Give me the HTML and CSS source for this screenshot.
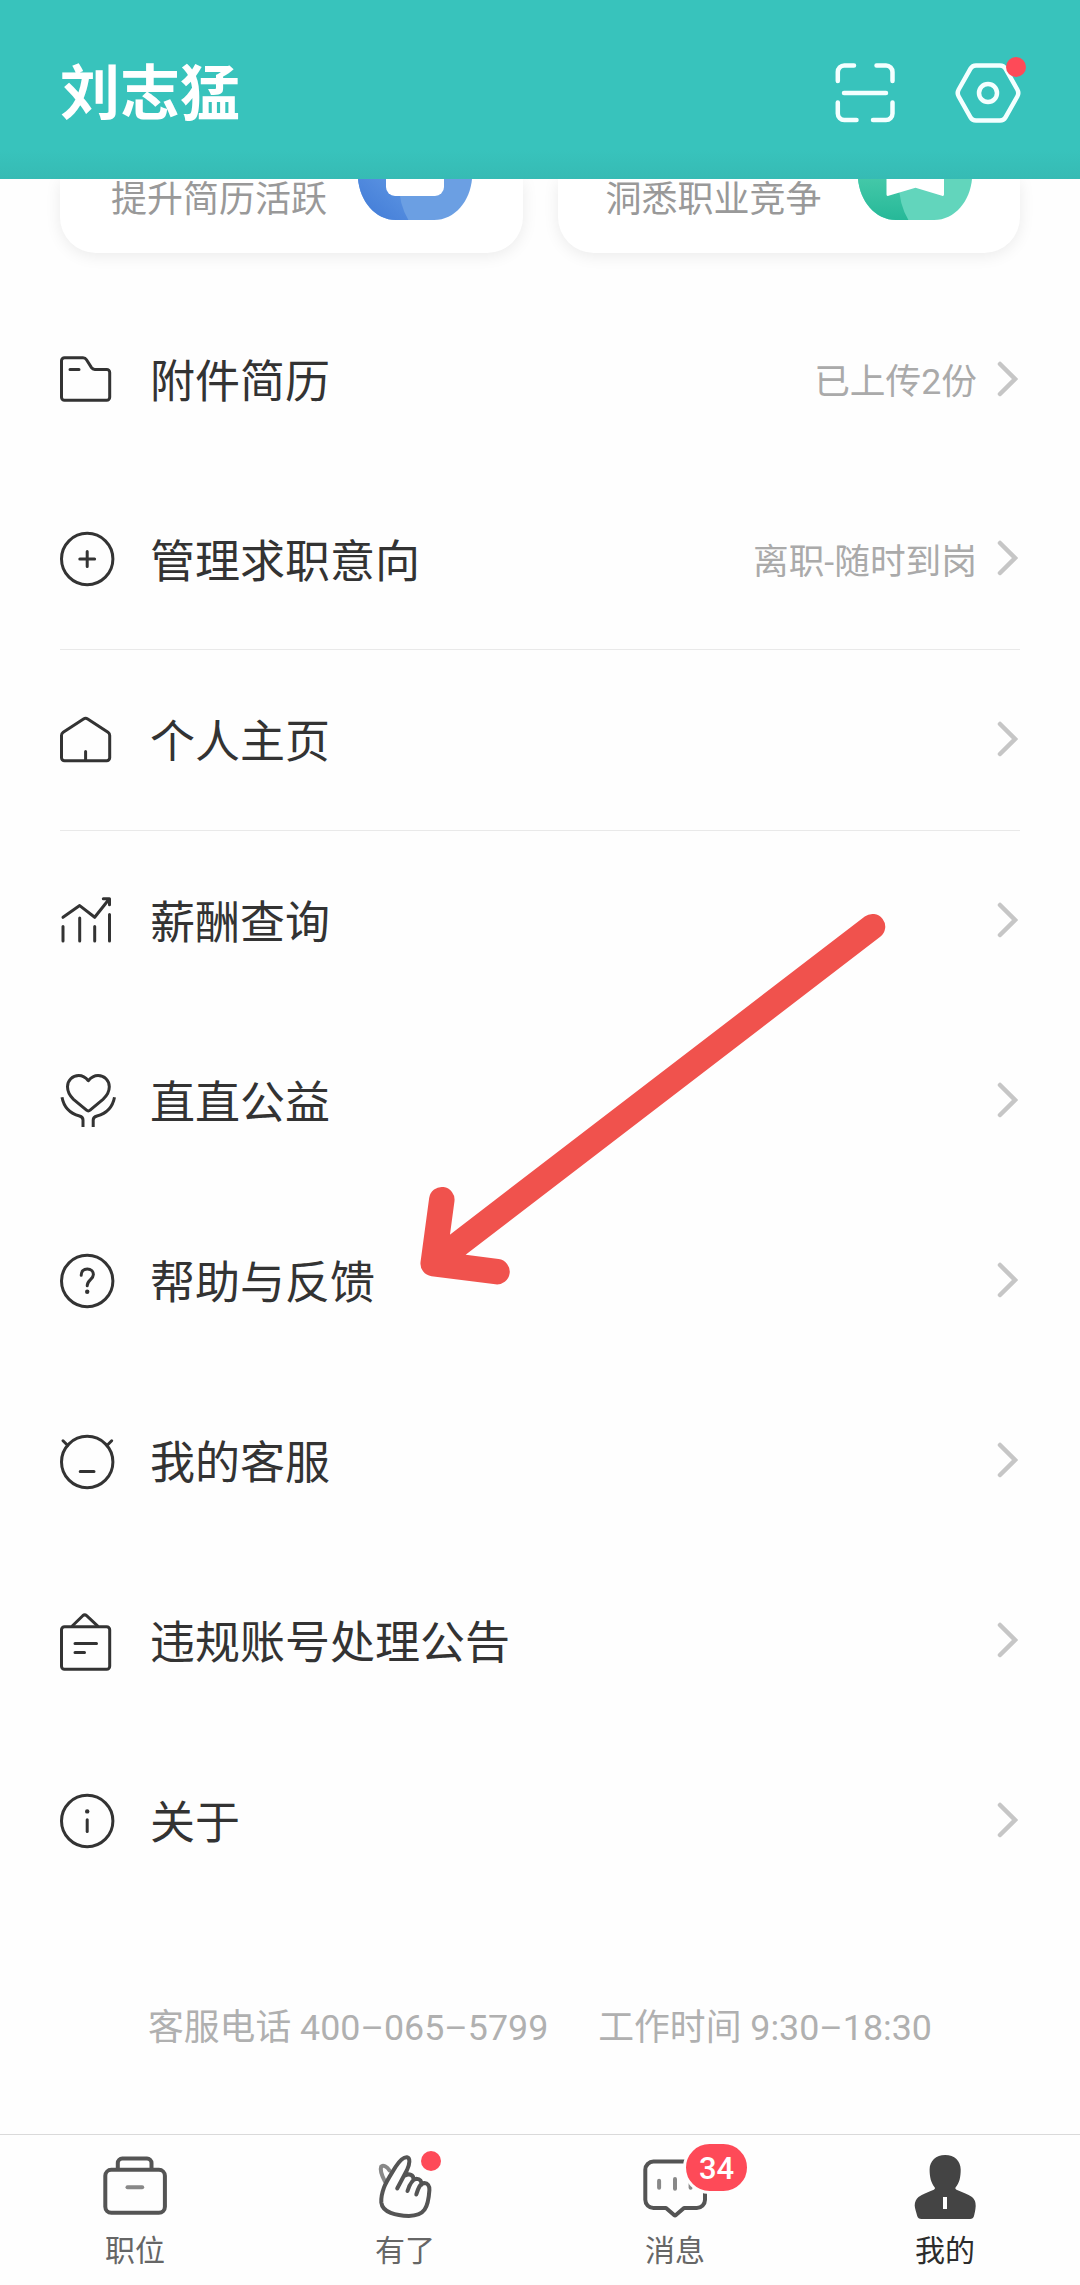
FILE: index.html
```html
<!DOCTYPE html>
<html lang="zh-CN">
<head>
<meta charset="utf-8">
<title>我的</title>
<link rel="stylesheet" href="styles.css">
</head>
<body>
<div class="app">
  <header class="header">
    <h1 class="name">刘志猛</h1>
    <div class="actions">
      <svg class="action" width="60" height="60" viewBox="0 0 60 60"><path d="M2.8 18V9a6.5 6.5 0 0 1 6.5-6.500H19M41.500 2.500H51a6.500 6.500 0 0 1 6.500 6.500V18M57.500 39.500V50.500a6.500 6.500 0 0 1-6.500 6.500H38M21.500 57H9.300a6.500 6.500 0 0 1-6.500-6.500V39.500M9 30H51"/></svg>
      <span class="with-dot">
        <svg class="action" width="66" height="60" viewBox="0 0 66 60"><path d="M21 2.500H45Q48.600 2.500 50.500 5.700L62.300 26.500Q64.300 30 62.300 33.500L50.500 54.300Q48.600 57.500 45 57.500H21Q17.400 57.500 15.500 54.300L3.700 33.500Q1.700 30 3.700 26.500L15.500 5.700Q17.400 2.500 21 2.500Z"/><circle cx="33" cy="30" r="9"/></svg>
        <i class="dot dot-settings"></i>
      </span>
    </div>
  </header>

  <section class="cards">
    <div class="card card-refresh">
      <span>提升简历活跃</span>
      <svg width="114" height="42" viewBox="0 0 114 42">
        <defs>
          <clipPath id="c1"><path d="M0 0C2 22 17 41 38 41H76C97 41 112 22 114 0Z"/></clipPath>
          <linearGradient id="g1" x1="0" y1="1" x2="1" y2="0"><stop offset="0" stop-color="#3f79d6"/><stop offset="1" stop-color="#5f97e3"/></linearGradient>
        </defs>
        <g clip-path="url(#c1)"><path fill="#6b9fe3" d="M0 0H114V42H0Z"/><path fill="url(#g1)" d="M0 0H41Q40 24 51 42H0Z"/></g>
        <path fill="#fff" d="M28 0H86V8a9 9 0 0 1-9 9H37a9 9 0 0 1-9-9Z"/>
      </svg>
    </div>
    <div class="card card-insight">
      <span>洞悉职业竞争</span>
      <svg width="114" height="42" viewBox="0 0 114 42">
        <defs>
          <clipPath id="c2"><path d="M0 0C2 22 17 41 38 41H76C97 41 112 22 114 0Z"/></clipPath>
          <linearGradient id="g2" x1="0" y1="1" x2="0" y2="0"><stop offset="0" stop-color="#26b898"/><stop offset="1" stop-color="#43c8a8"/></linearGradient>
        </defs>
        <g clip-path="url(#c2)"><path fill="#62d5bc" d="M0 0H114V42H0Z"/><path fill="url(#g2)" d="M0 0H41Q40 24 51 42H0Z"/></g>
        <path fill="#fff" d="M28.500 0H86V15.500Q86 17.500 84 16.800L57.500 8.800L30.500 16.800Q28.500 17.500 28.500 15.500Z"/>
      </svg>
    </div>
  </section>

  <main class="menu">
    <div class="row">
      <svg class="icon" viewBox="0 0 60 60"><path d="M4.500 7.800H23Q25.300 7.800 26.500 9.700L31.500 17.600Q32.700 19.400 34.800 19.400H46.700a3 3 0 0 1 3 3V47.200a3 3 0 0 1-3 3H4.500a3 3 0 0 1-3-3V10.800a3 3 0 0 1 3-3ZM10 19.400H19"/></svg>
      <span class="label">附件简历</span><span class="value">已上传2份</span>
      <svg class="chev" viewBox="0 0 22 36"><path d="M3 3L18 18L3 33"/></svg>
    </div>
    <div class="row divided">
      <svg class="icon" viewBox="0 0 60 60"><circle cx="27.200" cy="29" r="25.700"/><path d="M19.800 29H34.600M27.200 21.600V36.400"/></svg>
      <span class="label">管理求职意向</span><span class="value">离职-随时到岗</span>
      <svg class="chev" viewBox="0 0 22 36"><path d="M3 3L18 18L3 33"/></svg>
    </div>
    <div class="row divided tall">
      <svg class="icon" viewBox="0 0 60 60"><path d="M23.500 9Q25.600 7.600 27.700 9L48 22.300Q49.700 23.500 49.700 25.500V47.800a3 3 0 0 1-3 3H4.500a3 3 0 0 1-3-3V25.500Q1.500 23.500 3.200 22.300ZM25.600 41.500V50"/></svg>
      <span class="label">个人主页</span>
      <svg class="chev" viewBox="0 0 22 36"><path d="M3 3L18 18L3 33"/></svg>
    </div>
    <div class="row">
      <svg class="icon" viewBox="0 0 60 60"><path d="M3 26.300L19.700 14.600L34.700 26.300L48.800 8.500M43.300 7.800H49.500V13.800M3 35.500V50M19.700 27V50M34.700 35.500V50M49.500 23.500V50"/></svg>
      <span class="label">薪酬查询</span>
      <svg class="chev" viewBox="0 0 22 36"><path d="M3 3L18 18L3 33"/></svg>
    </div>
    <div class="row">
      <svg class="icon butt" viewBox="0 0 60 60"><path d="M28.300 9.700C25.500 6.200 22.500 4.500 18.700 4.500C12.500 4.500 7.500 9.500 7.500 15.800C7.500 21 10 25 13.500 28.300L26.500 39.200Q28.300 40.700 30.100 39.200L43 28.300C46.700 25 49.300 21 49.300 15.800C49.300 9.500 44.300 4.500 38.100 4.500C34.300 4.500 31.200 6.200 28.300 9.700ZM2 26.300C3.800 36 9 42.300 19.500 45Q23 46 23 49V56M54.500 26.300C52.700 36 47.500 42.300 37 45Q33.200 46 33.200 49V56"/></svg>
      <span class="label">直直公益</span>
      <svg class="chev" viewBox="0 0 22 36"><path d="M3 3L18 18L3 33"/></svg>
    </div>
    <div class="row">
      <svg class="icon" viewBox="0 0 60 60"><circle cx="27.200" cy="30" r="25.700"/><path d="M21.200 24.200C21.200 20.500 23.700 17.900 27.300 17.900C30.900 17.900 33.400 20.400 33.400 23.600C33.400 28.500 27.200 29 27.200 34.800"/><circle class="fill" cx="27.200" cy="40.700" r="2.200"/></svg>
      <span class="label">帮助与反馈</span>
      <svg class="chev" viewBox="0 0 22 36"><path d="M3 3L18 18L3 33"/></svg>
    </div>
    <div class="row">
      <svg class="icon" viewBox="0 0 60 60"><circle cx="27.200" cy="31" r="25.700"/><path d="M3 9.800L7.500 14.200M51.700 9.800L47.200 14.200M20.200 40.400H34"/></svg>
      <span class="label">我的客服</span>
      <svg class="chev" viewBox="0 0 22 36"><path d="M3 3L18 18L3 33"/></svg>
    </div>
    <div class="row">
      <svg class="icon" viewBox="0 0 60 60"><rect x="1.500" y="15.800" width="48.200" height="42.500" rx="3"/><path d="M12.500 14.800L22.800 4.700Q24.700 3 26.600 4.700L37.500 14.800M15 32.400H36.500M15 41.400H24.500"/></svg>
      <span class="label">违规账号处理公告</span>
      <svg class="chev" viewBox="0 0 22 36"><path d="M3 3L18 18L3 33"/></svg>
    </div>
    <div class="row">
      <svg class="icon" viewBox="0 0 60 60"><circle cx="27.200" cy="30" r="25.700"/><circle class="fill" cx="27.200" cy="20.400" r="2.200"/><path d="M27.200 28.800V40.500"/></svg>
      <span class="label">关于</span>
      <svg class="chev" viewBox="0 0 22 36"><path d="M3 3L18 18L3 33"/></svg>
    </div>
  </main>

  <footer class="contact"><span>客服电话 <b>400–065–5799</b></span><span>工作时间 <b>9:30–18:30</b></span></footer>

  <nav class="tabs">
    <div class="tab">
      <svg class="tab-icon" viewBox="0 0 80 72"><rect x="10.300" y="19.800" width="59.600" height="43" rx="6"/><path d="M22.800 19V13a4.500 4.500 0 0 1 4.500-4.500H52a4.500 4.500 0 0 1 4.500 4.500V19"/><path class="soft" d="M32.500 37.200H47.200"/></svg>
      <span>职位</span>
    </div>
    <div class="tab">
      <svg class="tab-icon" viewBox="0 0 80 72"><path class="soft" d="M20 31.500C16.500 25 15 19.500 16.200 16.500C18 14.500 22 16.500 24.500 20.500"/><path d="M32.200 38.500L42 20C44.800 14 45.500 7.800 42 7.200C38 6.800 34 11.500 30.500 17C26 24.500 21.500 31 19 37.500C17 43 16 48 16.300 52.500C17.500 62.500 31 65.900 44 65.900C59.500 65.900 63.200 58 64.400 40C64.600 35.500 62.500 33 59.500 33C54.500 33.200 53 39 51.300 44.500M42.500 41C44.800 34 47.200 29.200 51.500 28.800C55 28.800 57 31.500 56.300 34.800M40 25.500C44 23 48.800 25 48.500 29.500"/></svg>
      <i class="dot dot-tab"></i>
      <span>有了</span>
    </div>
    <div class="tab">
      <svg class="tab-icon" viewBox="0 0 80 72"><path d="M18.500 11.600H61.800a8.200 8.200 0 0 1 8.200 8.200V49.800a8.200 8.200 0 0 1-8.200 8.200H49L40.900 65Q40 65.800 39.100 65L31 58H18.500a8.200 8.200 0 0 1-8.200-8.200V19.800a8.200 8.200 0 0 1 8.200-8.200Z"/><path class="soft" d="M24.100 30.800V37.700M40 29V38.700M55.600 30.800V37.700"/></svg>
      <em class="badge">34</em>
      <span>消息</span>
    </div>
    <div class="tab active">
      <svg class="tab-icon" viewBox="0 0 80 72"><path class="person" d="M40.200 5C49.500 5 55.700 11 55.700 19.500C55.700 27 54.500 33 50.500 37.500Q49.800 38.800 51.500 39.700C57 42 63 44 67 47Q70.800 50 70.700 56C70.500 60 69.700 63 69 66Q68.200 69 65 69H16.500Q13 69 12.200 66C11.200 62 9.800 58 9.700 55.500Q9.800 50 13.500 47C17.500 44 23 42 28.800 39.700Q30.500 38.800 29.800 37.500C26 33 24.600 27 24.600 19.500C24.600 11 31 5 40.200 5Z"/><path fill="#fff" d="M38 47H42V59H38Z"/></svg>
      <span>我的</span>
    </div>
  </nav>

  <svg class="arrow" width="478" height="390" viewBox="0 0 478 390"><path d="M462.500 23.700L23.200 360.500M31.800 296.700L23.200 360.500L87 368.700"/></svg>
</div>
</body>
</html>
```
FILE: styles.css
```css
* { box-sizing: border-box; margin: 0; padding: 0; }

body {
  background: #fefefe;
  font-family: Roboto, "Noto Sans CJK SC", sans-serif;
  color: #333;
}

svg { display: block; flex: none; }
i, em, b { font-style: normal; font-weight: 400; }

.app {
  position: relative;
  width: 1080px;
  height: 2285px;
  display: flex;
  flex-direction: column;
  overflow: hidden;
}

.header {
  height: 179px;
  padding: 7px 59px 0 60px;
  display: flex;
  align-items: center;
  justify-content: space-between;
  background: linear-gradient(to bottom, #38c3bc 150px, #36bbb4 179px);
}
.name {
  padding-top: 4px;
  font-size: 60px;
  line-height: 80px;
  font-weight: 700;
  color: #fff;
}
.actions { display: flex; gap: 60px; }
.action {
  fill: none;
  stroke: #f4ffff;
  stroke-width: 4.5;
  stroke-linecap: round;
  stroke-linejoin: round;
}
.with-dot { position: relative; }
.dot {
  position: absolute;
  width: 20px;
  height: 20px;
  border-radius: 50%;
  background: #fe4a58;
}
.dot-settings { left: 51px; top: -6px; }

.cards {
  height: 111px;
  padding: 0 60px;
  display: grid;
  grid-template-columns: 1fr 1fr;
  gap: 35px;
  overflow: hidden;
}
.card {
  height: 74px;
  display: flex;
  align-items: flex-start;
  justify-content: space-between;
  border-radius: 0 0 36px 36px;
  background: #fff;
  box-shadow: 0 3px 16px rgba(0, 0, 0, .08);
  font-size: 36px;
  line-height: 43px;
  color: #999;
}
.card-refresh { padding: 0 51px; }
.card-insight { padding: 0 48px; }

.menu { padding: 0 60px; }
.row {
  height: 180px;
  display: flex;
  align-items: center;
}
.divided { border-bottom: 1px solid #e9e9e9; }
.tall { height: 181px; }
.icon {
  width: 60px;
  height: 60px;
  margin-right: 30px;
  overflow: visible;
  fill: none;
  stroke: #333;
  stroke-width: 3;
  stroke-linecap: round;
  stroke-linejoin: round;
}
.icon.butt { stroke-linecap: butt; }
.icon .fill { fill: #333; stroke: none; }
.label {
  flex: 1;
  padding-top: 6px;
  font-size: 45px;
  line-height: 60px;
}
.value {
  padding-top: 4px;
  margin-right: 20px;
  font-size: 35.7px;
  line-height: 50px;
  color: #aaa;
}
.chev {
  width: 22px;
  height: 36px;
  margin: -3px 1px 0 0;
  fill: none;
  stroke: #c6c6c6;
  stroke-width: 4.5;
  stroke-linecap: round;
}

.contact {
  flex: 1;
  padding-top: 92px;
  display: flex;
  justify-content: center;
  gap: 50px;
  font-size: 35.8px;
  line-height: 50px;
  color: #b0b0b0;
}

.tabs {
  height: 151px;
  padding-top: 15px;
  display: grid;
  grid-template-columns: repeat(4, 1fr);
  border-top: 1px solid #dadada;
}
.tab {
  position: relative;
  display: flex;
  flex-direction: column;
  align-items: center;
  gap: 11px;
  font-size: 30px;
  line-height: 36px;
  color: #666;
}
.tab.active { color: #2c2c2c; }
.tab-icon {
  width: 80px;
  height: 72px;
  fill: none;
  stroke: #545454;
  stroke-width: 4;
  stroke-linecap: round;
  stroke-linejoin: round;
}
.tab-icon .soft { stroke: #888; }
.tab-icon .person { fill: #444; stroke: none; }
.tab-icon [fill] { stroke: none; fill: #fff; }
.dot-tab { left: 151px; top: 1px; }
.badge {
  position: absolute;
  left: 143px;
  top: -9px;
  width: 67px;
  height: 53px;
  border: 3px solid #fefefe;
  border-radius: 27px;
  background: #fe4a58;
  color: #fff;
  font-size: 31px;
  font-weight: 500;
  line-height: 49px;
  text-align: center;
}

.arrow {
  position: absolute;
  left: 410px;
  top: 903px;
  fill: none;
  stroke: #f0524d;
  stroke-width: 25.5;
  stroke-linecap: round;
  stroke-linejoin: round;
}
```
